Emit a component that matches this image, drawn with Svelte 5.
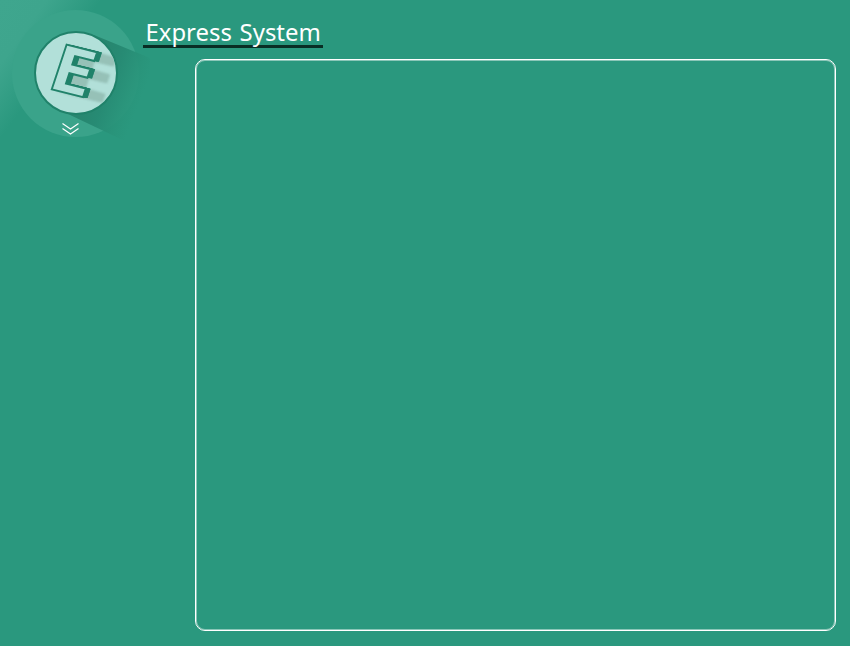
<script>
  const title = 'Express System';
  const depth = [1, 2, 3, 4, 4.6];
  const shade = [6, 8, 10, 12, 14, 16, 18, 20];
</script>

<div class="page">
  <aside>
    <svg width="150" height="150" viewBox="0 0 150 150" aria-label="Express logo">
      <defs>
        <linearGradient id="cast" gradientUnits="userSpaceOnUse" x1="95" y1="75" x2="143" y2="94">
          <stop offset="0" stop-color="#27866f" />
          <stop offset=".35" stop-color="#278b74" />
          <stop offset=".75" stop-color="#29947a" stop-opacity=".9" />
          <stop offset="1" stop-color="#2a987e" stop-opacity=".85" />
        </linearGradient>
        <filter id="soft" x="-20%" y="-20%" width="140%" height="140%"><feGaussianBlur stdDeviation="1.1" /></filter>
        <clipPath id="disc"><circle cx="76" cy="73" r="40" /></clipPath>
      </defs>
      <circle cx="75.5" cy="73.5" r="63.5" fill="#3aa38a" />
      <path d="M94 35L150 58V153L68 114Z" fill="url(#cast)" />
      <circle cx="76" cy="73" r="41" fill="#b2e0d9" stroke="#20826a" stroke-width="2" />
      <g clip-path="url(#disc)" opacity=".85">
        <g filter="url(#soft)">
          {#each shade as d}
            <text transform="matrix(1.02 .255 -.345 1.04 {46 + d} {88 + d * .28})" fill="#91bbb1">E</text>
          {/each}
        </g>
      </g>
      {#each depth as d}
        <text transform="matrix(1.02 .255 -.345 1.04 {46.2 + d} {88 + d * .12})" fill="#20826a" stroke="#20826a" stroke-width=".5">E</text>
      {/each}
      <text transform="matrix(1.02 .255 -.345 1.04 46.2 88)" fill="#b2e0d9" stroke="#20826a" stroke-width="1.8">E</text>
      <path d="M62.5 123.5L70.5 129L78.5 123.5M62.5 128.5L70.5 134L78.5 128.5" fill="none" stroke="#fff" stroke-width="1.15" />
    </svg>
  </aside>
  <div class="main">
    <h1>{title}</h1>
    <main></main>
  </div>
</div>

<style>
  :global(body) { margin: 0; }
  .page {
    box-sizing: border-box;
    display: flex;
    width: 850px;
    height: 646px;
    background: linear-gradient(126deg, #3fa68e 0, #3ea58d 38px, #2a987e 82px, #2a987e 100%);
    overflow: hidden;
  }
  aside { width: 143px; flex: none; }
  svg { display: block; overflow: visible; }
  text { font: bold 59px "DejaVu Sans", sans-serif; }
  .main { flex: 1; display: flex; flex-direction: column; padding: 18px 14px 15px 0; }
  h1 {
    box-sizing: border-box;
    width: 180px;
    height: 30px;
    margin: 0 0 11px;
    padding-left: 2.5px;
    border-bottom: 3px solid #092d24;
    color: #fff;
    font: 400 23.9px/28px "Noto Sans", sans-serif;
    word-spacing: 1.5px;
    white-space: nowrap;
  }
  main {
    box-sizing: border-box;
    flex: 1;
    margin-left: 52px;
    border: 1px solid #fff;
    border-radius: 10px;
    box-shadow: inset 0 0 0 1px rgb(255 255 255 / .45);
  }
</style>
